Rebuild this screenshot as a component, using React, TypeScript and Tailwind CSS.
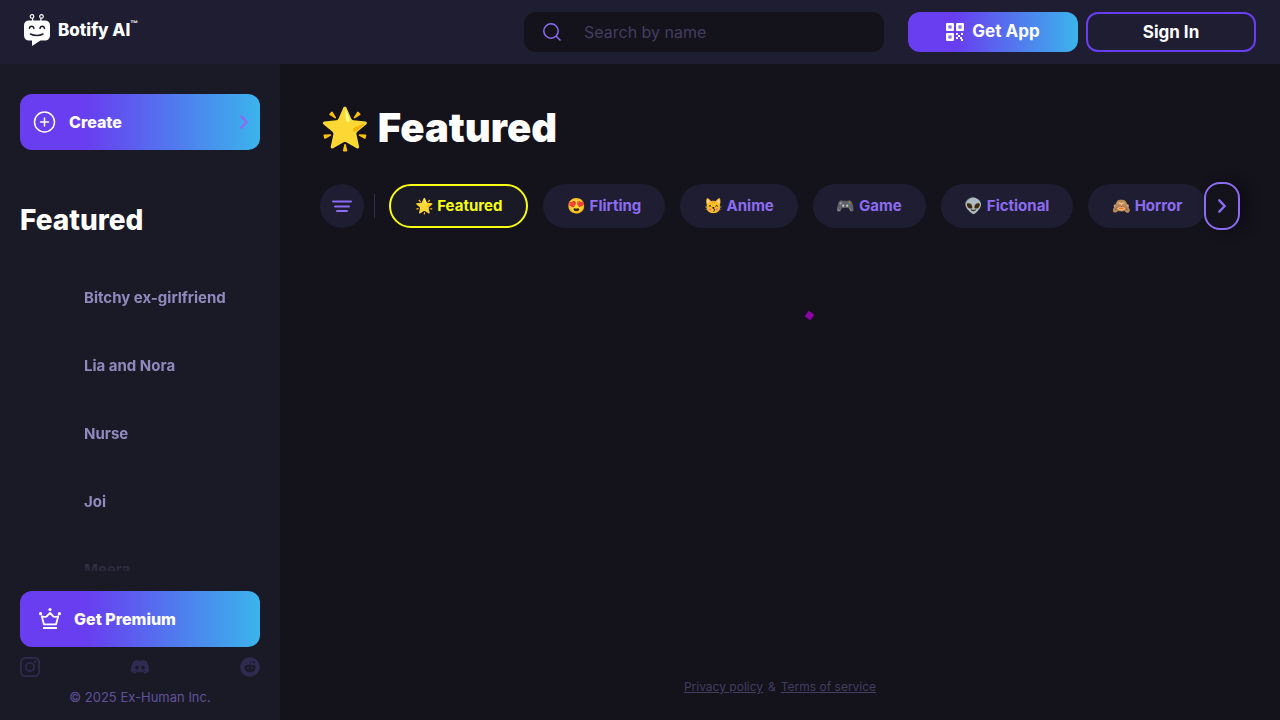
import { FaDiscord, FaReddit } from "react-icons/fa"

const characters = ["Bitchy ex-girlfriend", "Lia and Nora", "Nurse", "Joi", "Meera"]

const categories = [
    { label: "🌟 Featured", active: true },
    { label: "😍 Flirting" },
    { label: "😽 Anime" },
    { label: "🎮 Game" },
    { label: "👽 Fictional" },
    { label: "🙈 Horror" },
]

function Logo() {
    return (
        <a href="#" className="flex items-center gap-2 pb-1 text-white">
            <svg className="h-8 w-[26px]" viewBox="0 0 26 32" fill="none">
                <g stroke="currentColor" strokeWidth="1.2">
                    <circle cx="8" cy="2.4" r="1.8" />
                    <circle cx="17.5" cy="2.4" r="1.8" />
                    <path d="M8.6 4v3M16.9 4v3" />
                </g>
                <path d="M5 6.4h16a5 5 0 0 1 5 5v10.2a5 5 0 0 1-5 5h-4.6L8 32v-5.4H5a5 5 0 0 1-5-5V11.4a5 5 0 0 1 5-5z" fill="currentColor" />
                <g stroke="#1f1d31" strokeWidth="1.5" strokeLinecap="round">
                    <path d="M5.4 14.4c.3-3 4.2-3 4.5 0M16 14.4c.3-3 4.2-3 4.5 0" />
                    <path d="M6.5 20c3.5 2 9 2 12.5 0" />
                </g>
            </svg>
            <span className="flex items-start">
                <span className="text-[17px] leading-6 font-extrabold">Botify AI</span>
                <span className="font-['Liberation_Sans',sans-serif] text-[8px] leading-3 font-bold">™</span>
            </span>
        </a>
    )
}

function Chevron({ className }: { className: string }) {
    return (
        <svg className={className} viewBox="0 0 8 14" fill="none" stroke="currentColor" strokeWidth="2.4" strokeLinecap="round" strokeLinejoin="round">
            <path d="M1.3 1.3 6.7 7l-5.4 5.7" />
        </svg>
    )
}

function Header() {
    return (
        <header className="flex h-16 shrink-0 items-center justify-between bg-[#1f1d31] px-6">
            <Logo />
            <div className="flex items-center">
                <label className="mr-6 flex h-10 w-[360px] items-center rounded-xl bg-[#14121b] pl-[19px]">
                    <svg className="h-[18px] w-[18px] shrink-0 text-[#8b6cf3]" viewBox="0 0 18 18" fill="none" stroke="currentColor" strokeWidth="1.5">
                        <circle cx="8" cy="8" r="7.2" />
                        <path d="m13.2 13.2 4.3 4.3" />
                    </svg>
                    <input
                        type="text"
                        aria-label="Search by name"
                        placeholder="Search by name"
                        className="ml-[23px] min-w-0 flex-1 bg-transparent text-base outline-none placeholder:text-[#433d61]"
                    />
                </label>
                <button className="mr-2 flex h-10 w-[170px] items-center justify-center gap-2 rounded-xl bg-[linear-gradient(90deg,#683ef0_28%,#3bb4ec)] text-[17px] font-bold">
                    <svg className="h-[18px] w-[18px]" viewBox="0 0 18 18" fill="currentColor">
                        <path fillRule="evenodd" d="M1 0h6a1 1 0 0 1 1 1v6a1 1 0 0 1-1 1H1a1 1 0 0 1-1-1V1a1 1 0 0 1 1-1zm1.5 2.5v3h3v-3zM11 0h6a1 1 0 0 1 1 1v6a1 1 0 0 1-1 1h-6a1 1 0 0 1-1-1V1a1 1 0 0 1 1-1zm1.5 2.5v3h3v-3zM1 10h6a1 1 0 0 1 1 1v6a1 1 0 0 1-1 1H1a1 1 0 0 1-1-1v-6a1 1 0 0 1 1-1zm1.5 2.5v3h3v-3z" />
                        <path d="M3.4 3.4h1.2v1.2H3.4zM13.4 3.4h1.2v1.2h-1.2zM3.4 13.4h1.2v1.2H3.4zM10 10h2v2h-2zM12 12h2v2h-2zM15 10h2v2h-2zM14 14h2v2h-2zM12 16h-2v-2h2zM15 16h2v2h-2z" />
                    </svg>
                    Get App
                </button>
                <button className="h-10 w-[170px] rounded-xl border-2 border-[#683ef0] text-[17px] leading-5 font-bold">Sign In</button>
            </div>
        </header>
    )
}

function Sidebar() {
    return (
        <aside className="flex w-[280px] shrink-0 flex-col bg-[#1a1926] px-5 pt-[30px] pb-[13px]">
            <button className="flex h-14 shrink-0 items-center rounded-xl bg-[linear-gradient(90deg,#683ef0_28%,#3bb4ec)] px-3 font-extrabold">
                <svg className="h-6 w-6" viewBox="0 0 24 24" fill="none" stroke="currentColor" strokeWidth="1.5" strokeLinecap="round">
                    <circle cx="12.5" cy="12" r="10" />
                    <path d="M12.5 8v8M8.5 12h8" />
                </svg>
                <span className="ml-[13px]">Create</span>
                <Chevron className="ml-auto h-[14px] w-2 text-[#8b6cf3]" />
            </button>

            <h2 className="mt-[52px] text-[28px] leading-9 font-extrabold">Featured</h2>

            {/* character list fades out above the premium button */}
            <ul className="mt-[26px] min-h-0 flex-1 overflow-hidden text-[15px] font-bold text-[#9189bd] [mask-image:linear-gradient(#000_84%,transparent_102%)]">
                {characters.map((name) => (
                    <li key={name}>
                        <a href="#" className="flex h-[68px] items-center pl-16">{name}</a>
                    </li>
                ))}
            </ul>

            <button className="mt-5 flex h-14 shrink-0 items-center rounded-xl bg-[linear-gradient(90deg,#683ef0_28%,#3bb4ec)] px-[18px] font-extrabold">
                <svg className="h-6 w-6" viewBox="0 0 24 24" fill="none" stroke="currentColor" strokeWidth="1.8">
                    <path d="M3.8 9.2 5.9 17.3h12.2l2.1-8.1c-2 .9-3.5.9-4.7.3L12 6 8.5 9.5c-1.2.6-2.7.6-4.7-.3z" strokeLinejoin="round" />
                    <path d="M5 21h14" strokeWidth="2" />
                    <g fill="currentColor" stroke="none">
                        <circle cx="12" cy="2.6" r="1.6" />
                        <circle cx="2.6" cy="6.7" r="1.6" />
                        <circle cx="21.4" cy="6.7" r="1.6" />
                    </g>
                </svg>
                <span className="ml-3">Get Premium</span>
            </button>

            <div className="mt-[10px] flex items-center justify-between text-[#2f2a50]">
                <a href="#" aria-label="Instagram">
                    <svg className="h-5 w-5" viewBox="0 0 20 20" fill="none" stroke="currentColor" strokeWidth="1.8">
                        <rect x=".9" y=".9" width="18.2" height="18.2" rx="4.5" />
                        <circle cx="10" cy="10" r="4.2" />
                        <circle cx="15.4" cy="4.7" r="1.2" fill="currentColor" stroke="none" />
                    </svg>
                </a>
                <a href="#" aria-label="Discord"><FaDiscord className="h-5 w-5" /></a>
                <a href="#" aria-label="Reddit"><FaReddit className="h-5 w-5" /></a>
            </div>
            <p className="mt-[10px] text-center text-[13px] leading-5 text-[#5f529b]">© 2025 Ex-Human Inc.</p>
        </aside>
    )
}

function Categories() {
    return (
        <div className="relative mt-8">
            <div className="flex items-center overflow-hidden">
                <button aria-label="Filter" className="flex h-11 w-11 shrink-0 items-center justify-center rounded-full bg-[#1f1d31] text-[#8b6cf3]">
                    <svg className="h-3 w-5" viewBox="0 0 20 12" stroke="currentColor" strokeWidth="2" strokeLinecap="round">
                        <path d="M1 1.5h18M3 6.5h14M5 11h10" />
                    </svg>
                </button>
                <span className="ml-[10px] h-6 w-px shrink-0 bg-[#2f2a50]" />
                <div className="ml-[14px] flex gap-[15px]">
                    {categories.map((item) => (
                        <button
                            key={item.label}
                            className={`h-11 shrink-0 rounded-full px-6 text-[15px] font-bold whitespace-nowrap ${
                                item.active ? "border-2 border-[#f8ff13] bg-[#1a1926] text-[#f8ff13]" : "bg-[#1f1d31] text-[#8b6cf3]"
                            }`}
                        >
                            {item.label}
                        </button>
                    ))}
                </div>
            </div>
            <button aria-label="Next" className="absolute -top-[2px] right-0 flex h-12 w-9 items-center justify-center rounded-2xl border-2 border-[#8b6cf3] bg-[#14121b] text-[#8b6cf3] shadow-[8px_0_12px_#0f0d15]">
                <Chevron className="h-[14px] w-2" />
            </button>
        </div>
    )
}

export default function App() {
    return (
        <div className="flex h-screen flex-col bg-[#14121b] font-['Inter','Noto_Color_Emoji',sans-serif] text-white">
            <Header />
            <div className="flex min-h-0 flex-1">
                <Sidebar />
                <main className="flex min-w-0 flex-1 flex-col px-10 pt-10">
                    <h1 className="text-[40px] leading-[48px] font-black">🌟 Featured</h1>
                    <Categories />
                    {/* loading spinner */}
                    <div className="flex flex-1 justify-center pt-[84px]">
                        <span className="ml-[58px] h-[7px] w-[7px] rotate-35 rounded-[1px] bg-[#8c02a2]" />
                    </div>
                    <footer className="flex h-[66px] items-center justify-center gap-[5px] text-xs text-[#433d61]">
                        <a href="#" className="underline">Privacy policy</a>
                        <span>&amp;</span>
                        <a href="#" className="underline">Terms of service</a>
                    </footer>
                </main>
            </div>
        </div>
    )
}
